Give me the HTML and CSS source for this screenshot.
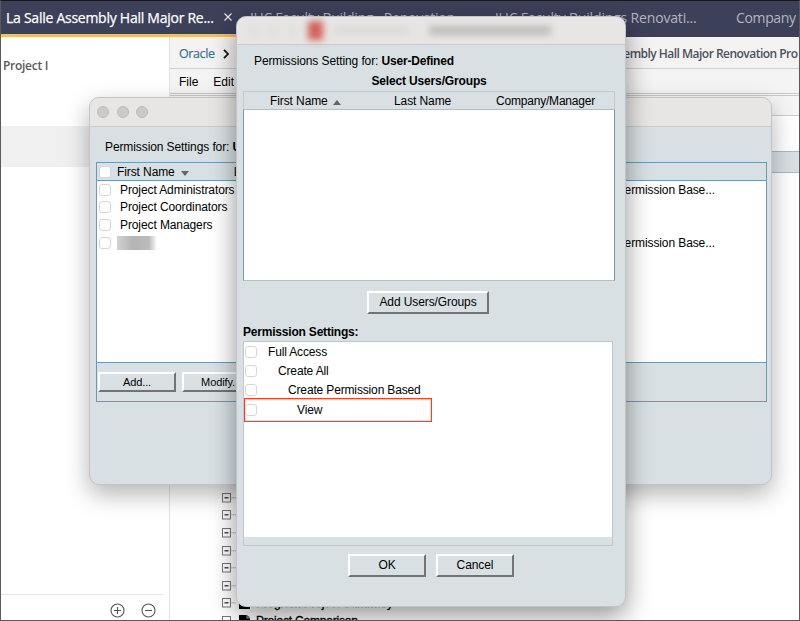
FILE: index.html
```html
<!DOCTYPE html>
<html lang="en">
<head>
<meta charset="utf-8">
<title>Permissions</title>
<link rel="stylesheet" href="styles.css">
</head>
<body>
<svg class="defs" width="0" height="0">
  <symbol id="node" viewBox="0 0 14 10"><rect x=".5" y=".5" width="8" height="8.5" fill="#fff" stroke="#777"/><path d="M2.5 4.8h4" stroke="#222" stroke-width="1.2"/><path d="M9.5 4.8h4.5" stroke="#999" stroke-dasharray="1 .6"/></symbol>
  <symbol id="doc" viewBox="0 0 12 11"><path d="M0 0h8l3 3v8H0z" fill="#000"/><path d="M8 0v3h3" fill="none" stroke="#ddd" stroke-width=".8"/></symbol>
</svg>
<div class="screen">
  <header class="tabs">
    <div class="tab active"><span class="t1">La Salle Assembly Hall Major Re...</span><svg class="x" viewBox="0 0 8 8"><path d="M.5.5l7 7M7.5.5l-7 7"/></svg></div>
    <div class="tab tab2"><span>JHC Faculty Building - Renovation</span></div>
    <div class="tab tab3"><span>JHC Faculty Buildings Renovati...</span></div>
    <div class="tab tab4"><span>Company</span></div>
  </header>
  <div class="work">
    <aside class="side">
      <div class="project">Project I</div>
      <div class="selected"></div>
      <div class="tools">
        <svg viewBox="0 0 15 15"><circle cx="7.5" cy="7.5" r="6.5"/><path d="M4 7.5h7M7.5 4v7"/></svg>
        <svg viewBox="0 0 15 15"><circle cx="7.5" cy="7.5" r="6.5"/><path d="M4 7.5h7"/></svg>
      </div>
    </aside>
    <main class="main">
      <nav class="crumbs"><span class="oracle">Oracle</span><svg class="chev" viewBox="0 0 6 10"><path d="M1 .8l4 4.2-4 4.2"/></svg><span class="hall">La Salle Assembly Hall Major Renovation Pro</span></nav>
      <div class="menu"><span>File</span><span>Edit</span></div>
      <div class="strip"></div>
      <div class="blank"></div>
      <div class="band"></div>
      <div class="tree">
        <div class="node"><svg><use href="#node"/></svg></div>
        <div class="node"><svg><use href="#node"/></svg></div>
        <div class="node"><svg><use href="#node"/></svg></div>
        <div class="node"><svg><use href="#node"/></svg></div>
        <div class="node"><svg><use href="#node"/></svg></div>
        <div class="node"><svg><use href="#node"/></svg></div>
        <div class="node"><svg><use href="#node"/></svg><svg class="doc"><use href="#doc"/></svg><span>Program Project Summary</span></div>
        <div class="node"><svg><use href="#node"/></svg><svg class="doc"><use href="#doc"/></svg><span>Project Comparison</span></div>
      </div>
    </main>
  </div>

  <section class="window back">
    <div class="title"><i></i><i></i><i></i></div>
    <p class="for">Permission Settings for: <b>User-Defined</b></p>
    <div class="grid">
      <div class="head"><span class="cb"></span><span class="name">First Name</span><svg class="tri" viewBox="0 0 8 5"><path d="M0 0h8L4 5z"/></svg><span class="last">Last Name</span></div>
      <div class="rows">
        <div class="row"><span class="cb"></span><span class="who">Project Administrators</span><span class="perm">Create Permission Base...</span></div>
        <div class="row"><span class="cb"></span><span class="who">Project Coordinators</span></div>
        <div class="row"><span class="cb"></span><span class="who">Project Managers</span></div>
        <div class="row"><span class="cb"></span><span class="who"><span class="redact"></span></span><span class="perm">Create Permission Base...</span></div>
      </div>
      <div class="foot"><div class="btn add">Add...</div><div class="btn modify">Modify...</div></div>
    </div>
  </section>

  <section class="window front">
    <div class="title"><div class="smear"><i class="d"></i><i class="d"></i><i class="d"></i><i class="red"></i><i class="l1"></i><i class="l2"></i></div></div>
    <p class="for">Permissions Setting for: <b>User-Defined</b></p>
    <h2>Select Users/Groups</h2>
    <div class="users">
      <div class="cols"><span class="c1">First Name<svg class="tri" viewBox="0 0 8 5"><path d="M0 5h8L4 0z"/></svg></span><span class="c2">Last Name</span><span class="c3">Company/Manager</span></div>
      <div class="list"></div>
    </div>
    <div class="btn groups">Add Users/Groups</div>
    <h3>Permission Settings:</h3>
    <div class="perms">
      <div class="opts">
        <div class="opt"><span class="cb"></span><span>Full Access</span></div>
        <div class="opt o2"><span class="cb"></span><span>Create All</span></div>
        <div class="opt o3"><span class="cb"></span><span>Create Permission Based</span></div>
        <div class="opt o4"><span class="cb"></span><span>View</span></div>
      </div>
    </div>
    <div class="actions"><div class="btn">OK</div><div class="btn">Cancel</div></div>
  </section>
</div>
</body>
</html>
```
FILE: styles.css
```css
* { box-sizing: border-box; }
body { margin: 0; font: 12px/14px "Liberation Sans", Arial, sans-serif; color: #000; }
p, h2, h3 { margin: 0; font-size: 12px; line-height: 14px; }
svg { display: block; flex: none; }
.defs { position: absolute; }
.screen { position: relative; width: 800px; height: 621px; overflow: hidden; border: 1px solid #5a5a5a; border-top-color: #15161e; background: #fff; white-space: nowrap; display: flex; flex-direction: column; }

.tabs { height: 36px; flex: none; background: #3d4059; display: flex; font: 14px/34px "Open Sans", sans-serif; color: #b4b6c2; }
.tab { overflow: hidden; flex: none; padding-left: 5px; height: 36px; }
.active { width: 244px; display: flex; align-items: flex-start; color: #fff; border-bottom: 3px solid #edc071; }
.t1 { width: 218px; letter-spacing: -.26px; -webkit-text-stroke: .25px #fff; }
.x { width: 8px; height: 8px; margin-top: 12px; stroke: #eee; fill: none; stroke-width: 1.1; }
.tab2 { width: 245px; letter-spacing: -.3px; }
.tab3 { width: 241px; letter-spacing: -.17px; }
.tab4 { width: 68px; letter-spacing: -.35px; }

.work { flex: 1; min-height: 0; display: flex; }
.side { width: 168px; flex: none; display: flex; flex-direction: column; }
.project { height: 89px; padding: 20px 2px; font: 600 12px/17px "Open Sans", sans-serif; letter-spacing: -.28px; color: #595959; }
.selected { height: 41px; background: #f0f0f0; }
.tools { margin-top: auto; height: 26px; width: 162px; border-top: 1px solid #e4e4e4; display: flex; gap: 16px; padding: 8px 0 0 109px; }
.tools svg { width: 15px; height: 15px; fill: none; stroke: #555; stroke-width: 1.1; }
.main { flex: 1; min-width: 0; border-left: 1px solid #e3e3e3; display: flex; flex-direction: column; }
.main > * { flex: none; }
.crumbs { height: 32px; background: #f5f3f1; border-bottom: 1px solid #cbd2d2; display: flex; align-items: center; padding: 3px 0 0 9px; font: 12.5px/18px "Open Sans", sans-serif; overflow: hidden; }
.oracle { flex: none; width: 44px; color: #317693; letter-spacing: -.4px; -webkit-text-stroke: .2px #317693; }
.chev { width: 6px; height: 10px; fill: none; stroke: #111; stroke-width: 1.8; }
.hall { margin-left: 334px; color: #49515e; font-size: 12px; font-weight: 600; letter-spacing: -.52px; }
.menu { height: 27px; background: #f4f4f4; border-bottom: 3px double #c9c9c9; padding: 6px 9px; display: flex; gap: 15px; }
.strip { height: 20px; background: #f5f5f5; border-bottom: 1px solid #ccc; }
.blank { height: 35px; }
.band { height: 22px; background: #d8e0e3; border: solid #a9bac0; border-width: 1px 0; }
.tree { margin: 316px 0 0 52px; }
.node { height: 17.6px; display: flex; align-items: center; }
.node svg { width: 14px; height: 10px; }
.node .doc { width: 12px; height: 11px; margin-left: 3px; }
.node span { margin-left: 5px; letter-spacing: -.2px; -webkit-text-stroke: .3px #000; }

.window { position: absolute; background: #d8e0e3; border-radius: 10px; overflow: hidden; border: 1px solid #c2c4c5; }
.title { background: #e7e6e4; border-bottom: 1px solid #c6cccd; display: flex; }
.back { left: 88px; top: 96px; width: 683px; height: 388px; box-shadow: 0 9px 24px rgba(0,0,0,.3); letter-spacing: -.1px; }
.back .title { height: 29px; gap: 7.5px; padding: 8px 7px; }
.back .title i { width: 12px; height: 12px; border-radius: 50%; background: #cbcac9; border: 1px solid #bbb; }
.back .for { padding: 13px 0 8px 15px; }
.grid { margin: 0 5px 0 6px; width: 671px; height: 240px; border: 1px solid #7199ae; display: flex; flex-direction: column; }
.head { height: 18px; border-bottom: 1px solid #7199ae; display: flex; align-items: center; padding: 0 0 0 2px; }
.cb { width: 12px; height: 12px; flex: none; background: #fff; border: 1px solid #d6d6d6; border-radius: 3px; }
.name { margin-left: 6px; }
.tri { width: 8px; height: 5px; fill: #666; }
.head .tri { margin: 4px 0 0 6px; }
.last { margin-left: 45px; }
.rows { flex: 1; background: #fff; }
.row { height: 17.6px; display: flex; align-items: center; padding-left: 2px; }
.who { flex: none; margin-left: 9px; width: 370px; }
.perm { margin-left: 88px; }
.redact { display: block; width: 40px; height: 14px; margin-left: -3px; background: linear-gradient(90deg, #d2d2d2, #b4b4b4 40%, #bbb 80%, #fff); }
.foot { height: 39px; border-top: 1px solid #7199ae; display: flex; gap: 6px; padding: 9px 0 0 1px; }
.btn { height: 23px; width: 78px; border: 2px solid; border-color: #fff #737373 #737373 #fff; text-align: center; line-height: 18px; }
.foot .btn { height: 20px; line-height: 16px; font-size: 11px; }

.front { left: 235px; top: 15px; width: 390px; height: 591px; box-shadow: 0 9px 26px rgba(0,0,0,.42); letter-spacing: -.1px; }
.front .title { height: 28px; }
.smear { display: flex; align-items: center; padding-left: 12px; filter: blur(3.5px); }
.d { width: 9px; height: 10px; margin-right: 10.5px; background: #dededc; }
.red { width: 15px; height: 19px; background: #d4605b; }
.l1 { width: 76px; height: 9px; margin-left: 10px; background: #dcdbd9; }
.l2 { width: 122px; height: 9px; margin-left: 20px; background: #bcbbb9; }
.front .for { padding: 9px 0 0 17px; height: 29px; }
.front .for b { letter-spacing: -.2px; }
h2 { text-align: center; width: 384px; letter-spacing: -.15px; }
.users { margin: 3px 0 0 6px; width: 372px; height: 190px; }
.cols { height: 18px; border: 1px solid #c5cbcc; border-bottom: 0; display: flex; align-items: center; }
.c1 { width: 123px; padding-left: 26px; display: flex; align-items: center; }
.c1 .tri { margin: 3px 0 0 5px; }
.c2 { width: 102px; padding-left: 27px; }
.c3 { padding-left: 27px; letter-spacing: -.2px; }
.list { height: 172px; background: #fff; border: 1px solid #7fa3b3; border-color: #b6bec0 #7199ae; }
.groups { margin: 10px 0 0 130px; width: 122px; }
h3 { margin: 11px 0 2px 6px; letter-spacing: -.2px; }
.perms { margin-left: 6px; width: 370px; height: 205px; border: 1px solid #c2c8c9; padding-bottom: 8px; }
.opts { height: 195px; background: #fff; }
.opt { height: 19.4px; display: flex; align-items: center; padding-left: 1px; gap: 11px; letter-spacing: -.15px; }
.o2 { gap: 21px; }
.o3 { gap: 31px; }
.o4 { width: 188px; height: 24px; margin-top: -2px; border: 1px solid #ef4526; padding-left: 0; gap: 40px; box-shadow: inset 0 0 0 .5px #f9a796; }
.actions { display: flex; gap: 10px; padding: 8px 0 0 111px; }
.actions .btn { width: 78px; }
```
